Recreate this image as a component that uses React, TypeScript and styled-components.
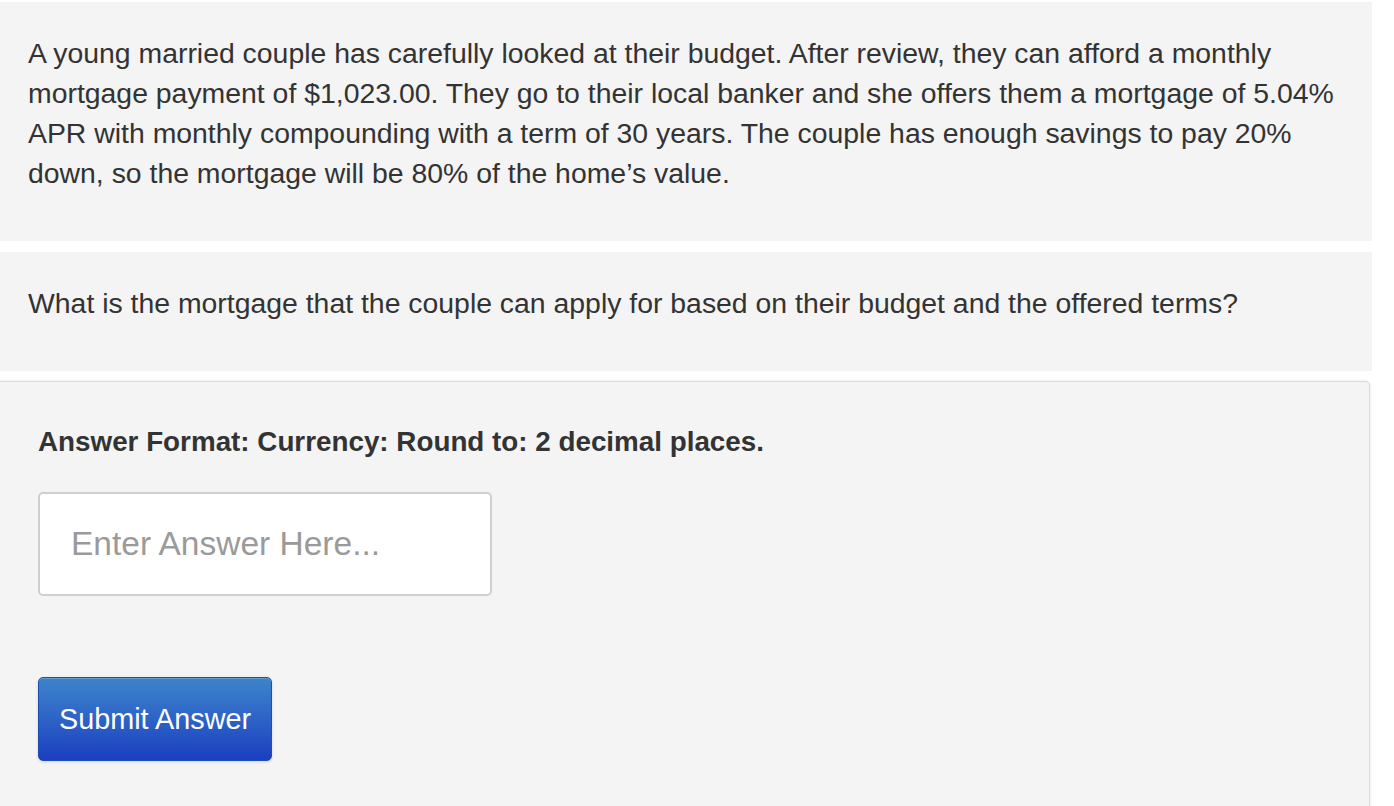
import React from "react";
import styled, { createGlobalStyle } from "styled-components";

const Global = createGlobalStyle`
  html, body { margin: 0; padding: 0; background: #ffffff; }
  body { font-family: "Liberation Sans", Arial, Helvetica, sans-serif; color: #333333; }
`;

const Page = styled.div`
  width: 1372px;
  padding-top: 2px;
  display: flex;
  flex-direction: column;
  gap: 11px;
`;

const Panel = styled.section`
  background: #f4f4f4;
  padding: 31px 20px 30px 28px;
`;

const Para = styled.p`
  margin: 0 0 18px;
  font-size: 28.4px;
  line-height: 40px;
  color: #333333;
`;

const AnswerCard = styled.section`
  margin-top: -1px;
  width: 1370px;
  min-height: 460px;
  box-sizing: border-box;
  background: #f4f4f4;
  border: 1px solid #dcdcdc;
  border-left: none;
  border-radius: 0 5px 0 0;
  box-shadow: 0 0 3px rgba(0, 0, 0, 0.12);
  padding: 40px 37px 40px 38px;
  display: flex;
  flex-direction: column;
  align-items: flex-start;
`;

const Format = styled.div`
  font-size: 27.8px;
  font-weight: 700;
  line-height: 40px;
  color: #333333;
  margin-bottom: 30px;
`;

const AnswerInput = styled.input`
  width: 454px;
  height: 104px;
  box-sizing: border-box;
  border: 2px solid #cfcfcf;
  border-radius: 5px;
  background: #ffffff;
  padding: 0 31px;
  font-family: "Liberation Sans", Arial, Helvetica, sans-serif;
  font-size: 33.5px;
  color: #333333;
  outline: none;
  &::placeholder { color: #9a9a9a; }
`;

const SubmitButton = styled.button`
  margin-top: 81px;
  width: 234px;
  height: 84px;
  box-sizing: border-box;
  border: 1px solid #1f4fae;
  border-radius: 5px;
  background: linear-gradient(to bottom, #3d84cc 0%, #2d63c6 50%, #1a3ec0 100%);
  box-shadow: inset 0 1px 0 rgba(255, 255, 255, 0.2), 0 1px 3px rgba(0, 0, 0, 0.15);
  color: #ffffff;
  font-family: "Liberation Sans", Arial, Helvetica, sans-serif;
  font-size: 28.8px;
  padding: 0;
  cursor: pointer;
`;

export default function App() {
  return (
    <>
      <Global />
      <Page>
        <Panel>
          <Para>
            A young married couple has carefully looked at their budget. After review, they can afford a monthly
            mortgage payment of $1,023.00. They go to their local banker and she offers them a mortgage of 5.04%
            APR with monthly compounding with a term of 30 years. The couple has enough savings to pay 20%
            down, so the mortgage will be 80% of the home’s value.
          </Para>
        </Panel>
        <Panel>
          <Para>What is the mortgage that the couple can apply for based on their budget and the offered terms?</Para>
        </Panel>
        <AnswerCard>
          <Format>Answer Format: Currency: Round to: 2 decimal places.</Format>
          <AnswerInput placeholder="Enter Answer Here..." />
          <SubmitButton>Submit Answer</SubmitButton>
        </AnswerCard>
      </Page>
    </>
  );
}
